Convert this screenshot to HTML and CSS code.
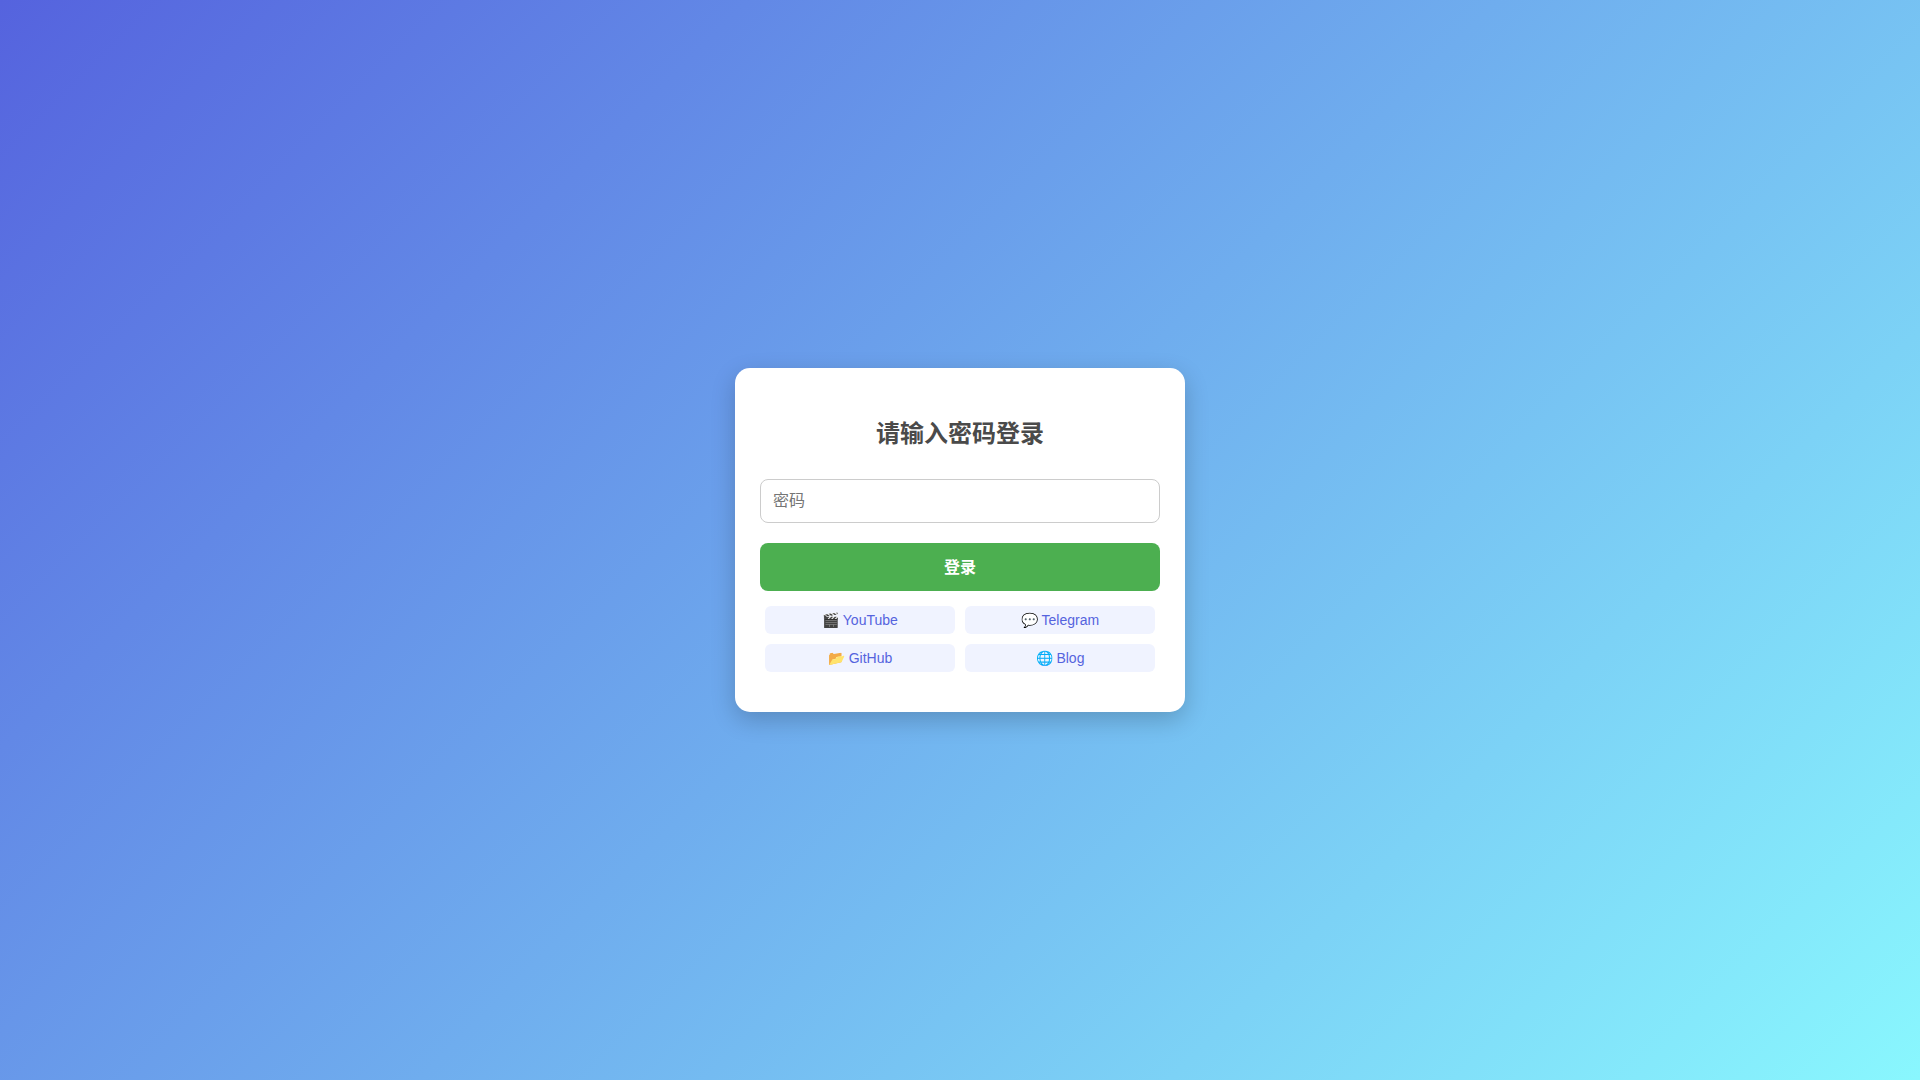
FILE: index.html
```html
<!DOCTYPE html>
<html lang="zh-CN">
<head>
    <meta charset="UTF-8">
    <title>登录</title>
    <meta name="viewport" content="width=device-width, initial-scale=1.0">
    <link rel="stylesheet" href="styles.css">
</head>
<body>
    <div class="login-container">
        <h2>请输入密码登录</h2>
        <form class="login-form" method="post">
            <input type="password" name="password" placeholder="密码" aria-label="密码" required>
            <button type="submit">登录</button>
        </form>
        <div class="links">
            <a href="#youtube">🎬 YouTube</a>
            <a href="#telegram">💬 Telegram</a>
            <a href="#github">📂 GitHub</a>
            <a href="#blog">🌐 Blog</a>
        </div>
    </div>
</body>
</html>
```
FILE: styles.css
```css
* {
    box-sizing: border-box;
}
body {
    background: linear-gradient(135deg, #5563de, #89f7fe);
    min-height: 100vh;
    display: flex;
    align-items: center;
    justify-content: center;
    margin: 0;
    font-family: "Liberation Sans", "Noto Sans CJK SC", Arial, sans-serif;
}
.login-container {
    background: #fff;
    border-radius: 15px;
    box-shadow: 0 8px 24px rgba(0, 0, 0, 0.2);
    padding: 25px 25px 40px;
    width: 90%;
    max-width: 450px;
    text-align: center;
}
h2 {
    margin: 23px 0 27px;
    font-size: 24px;
    line-height: 36px;
    color: #4a4a4a;
}
.login-form {
    display: flex;
    flex-direction: column;
    gap: 20px;
}
input {
    width: 100%;
    padding: 9px 12px;
    border: 1px solid #ccc;
    border-radius: 8px;
    font-family: inherit;
    font-size: 16px;
    line-height: 24px;
}
button {
    width: 100%;
    padding: 13px 12px 11px;
    border: none;
    border-radius: 8px;
    background: #4caf50;
    color: #fff;
    font-family: inherit;
    font-size: 16px;
    font-weight: bold;
    line-height: 24px;
    cursor: pointer;
}
button:hover {
    background: #45a049;
}
.links {
    display: grid;
    grid-template-columns: 1fr 1fr;
    gap: 10px;
    margin: 15px 5px 0;
}
.links a {
    padding: 6px;
    border-radius: 6px;
    background: #f0f3ff;
    color: #5563de;
    font-size: 14px;
    line-height: 16px;
    text-decoration: none;
}
.links a:hover {
    background: #dde3ff;
}
```
